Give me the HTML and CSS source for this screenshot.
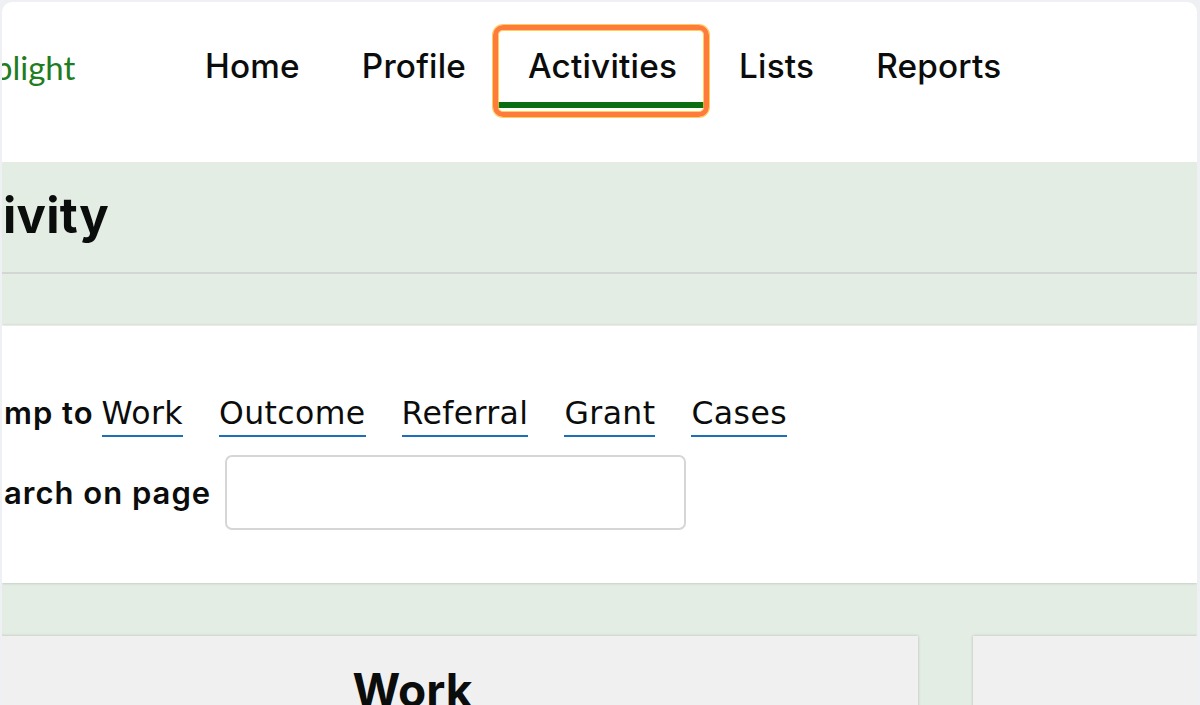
FILE: index.html
```html
<!DOCTYPE html>
<html lang="en">
<head>
<meta charset="utf-8">
<title>Activities</title>
<link rel="stylesheet" href="styles.css">
</head>
<body>
<div class="window">
  <header class="header">
    <div class="logo">plight</div>
    <nav class="nav">
      <a class="nav-link" href="#">Home</a>
      <a class="nav-link" href="#">Profile</a>
      <a class="nav-link active" href="#">Activities<span class="annot"></span></a>
      <a class="nav-link" href="#">Lists</a>
      <a class="nav-link" href="#">Reports</a>
    </nav>
  </header>

  <section class="page-head">
    <div class="title-row"><h1 class="title">ivity</h1></div>
    <div class="sub-band"></div>
  </section>

  <section class="jump-card">
    <div class="jump-row">
      <span class="label">mp to</span>
      <a class="jump-link first" href="#">Work</a>
      <a class="jump-link" href="#">Outcome</a>
      <a class="jump-link" href="#">Referral</a>
      <a class="jump-link" href="#">Grant</a>
      <a class="jump-link" href="#">Cases</a>
    </div>
    <div class="search-row">
      <label class="label" for="q">arch on page</label>
      <input class="search-input" id="q" type="text">
    </div>
  </section>

  <section class="panels-area">
    <div class="panels">
      <div class="panel"><h2 class="panel-title">Work</h2></div>
      <div class="panel"></div>
    </div>
  </section>
</div>
</body>
</html>
```

FILE: styles.css
```css
* { box-sizing: border-box; }

html, body {
  margin: 0;
  height: 705px;
  overflow: hidden;
}

body {
  background: #eff0f4;
  font-family: "Inter", "Liberation Sans", sans-serif;
  color: #0b0c0c;
}

.window {
  margin: 2px 3px 0 2px;
  height: 703px;
  background: #ffffff;
  border-radius: 10px 10px 0 0;
  overflow: hidden;
}

/* Header */
.header {
  height: 160px;
  display: grid;
  grid-template-columns: 172px auto;
  align-items: start;
  padding-top: 28px;
}

.logo {
  margin-left: -8px;
  padding-top: 1px;
  font-family: "Lato", "Liberation Sans", sans-serif;
  font-size: 33px;
  line-height: 73px;
  color: #1f7d1f;
}

.nav {
  display: flex;
}

.nav-link {
  position: relative;
  display: block;
  padding: 0 31px;
  font-size: 33.3px;
  font-weight: 500;
  line-height: 72px;
  letter-spacing: 0.2px;
  color: #0b0c0c;
  text-decoration: none;
  border-bottom: 6px solid transparent;
}

.nav-link.active {
  border-bottom-color: #0b6e13;
}

.annot {
  position: absolute;
  left: -4px;
  right: -1px;
  top: -5px;
  bottom: -15px;
  border: 5px solid #ff7a3d;
  border-radius: 10px;
  box-shadow: 0 0 0 1px rgba(255, 196, 40, 0.8), inset 0 0 0 1px rgba(255, 196, 40, 0.8);
  pointer-events: none;
}

/* Page heading band */
.page-head {
  background: #e3ede3;
}

.title-row {
  height: 112px;
  border-bottom: 2px solid #d3d7d3;
  padding-left: 1px;
}

.title {
  margin: 0;
  padding-top: 22px;
  font-size: 49px;
  font-weight: 700;
  line-height: 64px;
  letter-spacing: 0.3px;
  color: #0b0c0c;
}

.sub-band {
  height: 51px;
}

/* Jump card */
.jump-card {
  position: relative;
  background: #ffffff;
  height: 257px;
  margin-top: 1px;
  padding-top: 65px;
  box-shadow: 0 0 3px rgba(0, 0, 0, 0.22);
}

.jump-row {
  display: flex;
  align-items: flex-start;
  height: 46px;
}

.label {
  font-family: "Inter", "Liberation Sans", sans-serif;
  font-size: 31px;
  font-weight: 600;
  line-height: 44px;
  letter-spacing: 1px;
  padding-left: 2px;
  color: #0b0c0c;
}

.jump-link {
  display: inline-block;
  margin-left: 36px;
  font-family: "DejaVu Sans", "Liberation Sans", sans-serif;
  font-size: 31.5px;
  line-height: 44px;
  letter-spacing: 0.4px;
  color: #0b0c0c;
  text-decoration: none;
  border-bottom: 2px solid #1d70b8;
}

.jump-link.first {
  margin-left: 8px;
}

.search-row {
  display: flex;
  align-items: center;
  margin-top: 18px;
  gap: 14px;
}

.search-input {
  width: 461px;
  height: 75px;
  border: 2px solid #d6d6d6;
  border-radius: 7px;
  background: #ffffff;
  font-size: 28px;
}

/* Panels */
.panels-area {
  background: #e3ede3;
  padding-top: 53px;
  height: 300px;
}

.panels {
  display: grid;
  grid-template-columns: 1011px 1fr;
  gap: 55px;
  margin-left: -95px;
  height: 100%;
}

.panel {
  background: #f0f0f0;
  box-shadow: 0 0 3px rgba(0, 0, 0, 0.2);
}

.panel-title {
  margin: 0;
  padding-top: 26px;
  text-align: center;
  font-size: 46px;
  font-weight: 700;
  line-height: 56px;
  color: #0b0c0c;
}
```
